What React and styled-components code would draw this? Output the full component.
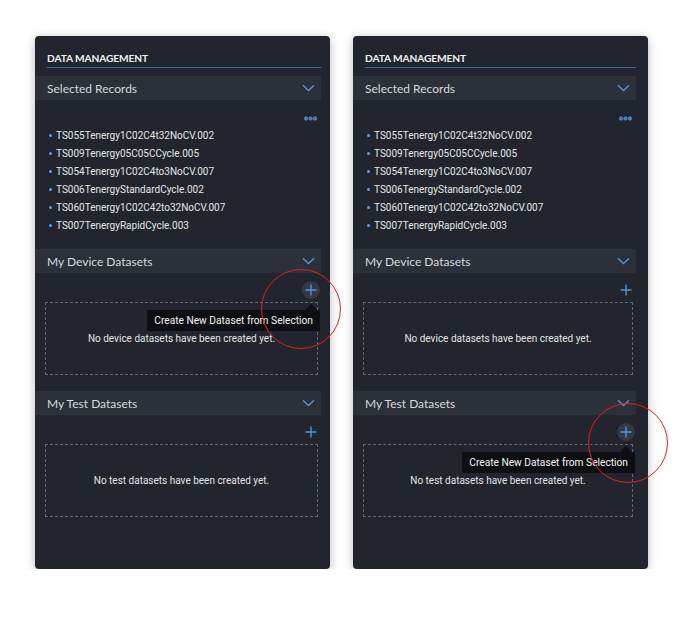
import React from 'react';
import styled, { createGlobalStyle } from 'styled-components';

const GlobalStyle = createGlobalStyle`
	body {
		margin: 0;
		background: #ffffff;
		font-family: Roboto, 'Liberation Sans', sans-serif;
	}
`;

const Page = styled.div`
	display: flex;
	gap: 23px;
	padding: 36px 0 0 35px;
`;

const Panel = styled.div`
	width: 295px;
	height: 533px;
	box-sizing: border-box;
	padding-right: ${(p) => p.$gutter}px;
	background: #22252d;
	border-radius: 4px;
	box-shadow: 0 2px 10px rgba(0, 0, 0, 0.28);
	display: flex;
	flex-direction: column;
`;

const Heading = styled.div`
	margin: 15px 0 8px 12px;
	padding-bottom: 2px;
	border-bottom: 1px solid #3c6a9b;
	font-family: Lato, sans-serif;
	font-weight: 700;
	font-size: 10.2px;
	line-height: 14px;
	color: #f2f2f2;
	letter-spacing: -0.1px;
`;

const Bar = styled.div`
	height: 24px;
	display: flex;
	align-items: center;
	justify-content: space-between;
	padding: 0 6px 0 12px;
	background: #2c3038;
	font-family: Lato, sans-serif;
	font-size: 12px;
	color: #d6d9de;
`;

const Section = styled.div`
	margin-bottom: ${(p) => p.$after}px;
`;

const Content = styled.div`
	padding: 13px 4px 0 12px;
`;

const DotsRow = styled.div`
	height: 10px;
	display: flex;
	justify-content: flex-end;
	align-items: center;
`;

const List = styled.ul`
	list-style: none;
	margin: 3px 0 0;
	padding: 0;
`;

const Item = styled.li`
	display: flex;
	align-items: center;
	gap: 4px;
	height: 18px;
	font-size: 10px;
	color: #e4e5e8;

	&::before {
		content: '';
		width: 3px;
		height: 3px;
		margin-left: 2px;
		border-radius: 50%;
		background: #5ba2ea;
	}
`;

const DatasetBody = styled.div`
	padding: 8px 3px 0 10px;
`;

const ActionRow = styled.div`
	display: flex;
	justify-content: flex-end;
	margin-right: -2px;
`;

const PlusButton = styled.div`
	position: relative;
	width: 18px;
	height: 18px;
	border-radius: 50%;
	display: flex;
	align-items: center;
	justify-content: center;
	background: ${(p) => (p.$hover ? '#333a46' : 'transparent')};
`;

const Tooltip = styled.div`
	position: absolute;
	top: 29px;
	right: 0;
	white-space: nowrap;
	background: #0e0f12;
	color: #f4f4f4;
	font-size: 10.2px;
	line-height: 21px;
	padding: 0 7px;
	z-index: 2;

	&::before {
		content: '';
		position: absolute;
		top: -6px;
		right: 3px;
		border-left: 6px solid transparent;
		border-right: 6px solid transparent;
		border-bottom: 6px solid #0e0f12;
	}
`;

const Marker = styled.div`
	position: absolute;
	width: 80px;
	height: 80px;
	box-sizing: border-box;
	border: 1.3px solid #e3201c;
	border-radius: 50%;
	left: ${(p) => p.$x - 40 + 9}px;
	top: ${(p) => p.$y - 40 + 9}px;
	z-index: 3;
	pointer-events: none;
`;

const EmptyBox = styled.div`
	box-sizing: border-box;
	margin-top: 3px;
	height: 73px;
	border: 1px dashed #62666e;
	display: flex;
	align-items: center;
	justify-content: center;
	font-size: 10px;
	color: #e2e3e6;
`;

const Chevron = () => (
	<svg width="13" height="8" viewBox="0 0 13 8">
		<path d="M1 1.2 L6.5 6.5 L12 1.2" fill="none" stroke="#4f95dc" strokeWidth="1.4" />
	</svg>
);

const Dots = () => (
	<svg width="13" height="5" viewBox="0 0 13 5">
		{[2, 6.5, 11].map((cx) => (
			<circle key={cx} cx={cx} cy="2.5" r="1.6" fill="#3d6fa6" stroke="#5ba2ea" strokeWidth="0.9" />
		))}
	</svg>
);

const Plus = () => (
	<svg width="12" height="12" viewBox="0 0 12 12">
		<path d="M6 0.5 V11.5 M0.5 6 H11.5" stroke="#4f95dc" strokeWidth="1.4" />
	</svg>
);

const records = [
	'TS055Tenergy1C02C4t32NoCV.002',
	'TS009Tenergy05C05CCycle.005',
	'TS054Tenergy1C02C4to3NoCV.007',
	'TS006TenergyStandardCycle.002',
	'TS060Tenergy1C02C42to32NoCV.007',
	'TS007TenergyRapidCycle.003',
];

const DatasetSection = ({ title, emptyText, hover, marker, after }) => (
	<Section $after={after}>
		<Bar>
			{title}
			<Chevron />
		</Bar>
		<DatasetBody>
			<ActionRow>
				<PlusButton $hover={hover}>
					<Plus />
					{hover && <Tooltip>Create New Dataset from Selection</Tooltip>}
					{hover && <Marker $x={marker.x} $y={marker.y} />}
				</PlusButton>
			</ActionRow>
			<EmptyBox>{emptyText}</EmptyBox>
		</DatasetBody>
	</Section>
);

const DataPanel = ({ hoverOn, marker, gutter }) => (
	<Panel $gutter={gutter}>
		<Heading>DATA MANAGEMENT</Heading>
		<Section $after={15}>
			<Bar>
				Selected Records
				<Chevron />
			</Bar>
			<Content>
				<DotsRow>
					<Dots />
				</DotsRow>
				<List>
					{records.map((r) => (
						<Item key={r}>{r}</Item>
					))}
				</List>
			</Content>
		</Section>
		<DatasetSection
			title="My Device Datasets"
			emptyText="No device datasets have been created yet."
			hover={hoverOn === 'device'}
			marker={marker}
			after={16}
		/>
		<DatasetSection
			title="My Test Datasets"
			emptyText="No test datasets have been created yet."
			hover={hoverOn === 'test'}
			marker={marker}
			after={0}
		/>
	</Panel>
);

const App = () => (
	<>
		<GlobalStyle />
		<Page>
			<DataPanel hoverOn="device" gutter={9} marker={{ x: -10, y: 19 }} />
			<DataPanel hoverOn="test" gutter={12} marker={{ x: 2, y: 11 }} />
		</Page>
	</>
);

export default App;
